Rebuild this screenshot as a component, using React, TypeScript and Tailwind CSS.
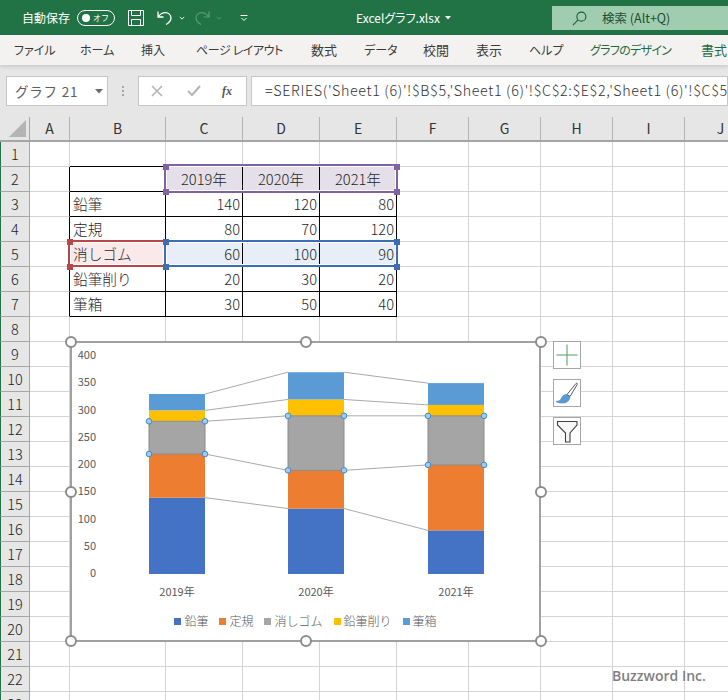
import React from "react";

const F = "font-['Noto_Sans_CJK_JP','Noto_Sans',sans-serif]";

const columns = [
  { label: "A", cls: "w-[40px]" },
  { label: "B", cls: "w-[96px]" },
  { label: "C", cls: "w-[77px]" },
  { label: "D", cls: "w-[77px]" },
  { label: "E", cls: "w-[77px]" },
  { label: "F", cls: "w-[72px]" },
  { label: "G", cls: "w-[72px]" },
  { label: "H", cls: "w-[72px]" },
  { label: "I", cls: "w-[72px]" },
  { label: "J", cls: "w-[72px]" },
];

const table: Record<number, string[]> = {
  2: ["", "2019年", "2020年", "2021年"],
  3: ["鉛筆", "140", "120", "80"],
  4: ["定規", "80", "70", "120"],
  5: ["消しゴム", "60", "100", "90"],
  6: ["鉛筆削り", "20", "30", "20"],
  7: ["筆箱", "30", "50", "40"],
};

const tabs = [
  { t: "ファイル", c: "w-[39px]" },
  { t: "ホーム", c: "w-[34px]" },
  { t: "挿入", c: "w-[28px]" },
  { t: "ページ レイアウト", c: "w-[88px] tracking-[-0.4px]" },
  { t: "数式", c: "w-[26px] text-[13px]" },
  { t: "データ", c: "w-[32px]" },
  { t: "校閲", c: "w-[26px] text-[13px]" },
  { t: "表示", c: "w-[26px] text-[13px]" },
  { t: "ヘルプ", c: "w-[34px]" },
  { t: "グラフのデザイン", c: "w-[84px] tracking-[-0.7px] text-[#1e6b41]" },
  { t: "書式", c: "w-[27px] text-[13px] text-[#1e6b41]" },
];

function Cell({ row, col }: { row: number; col: number }) {
  const inTable = row >= 2 && row <= 7 && col >= 1 && col <= 4;
  const value = inTable ? table[row][col - 1] : "";
  const w = columns[col].cls;
  const rightBlack = row >= 2 && row <= 7 && col >= 0 && col <= 4;
  const bottomBlack = row >= 1 && row <= 7 && col >= 1 && col <= 4;
  let bg = "bg-white";
  if (row === 2 && col >= 2 && col <= 4) bg = "bg-[#e4dfe9]";
  if (row === 5 && col === 1) bg = "bg-[#f9e9e9]";
  if (row === 5 && col >= 2 && col <= 4) bg = "bg-[#e8eef8]";
  const align =
    col === 1
      ? "justify-start pl-[3px]"
      : row === 2
      ? "justify-center"
      : "justify-end pr-[2px]";
  return (
    <div
      className={`${w} h-[25px] shrink-0 flex items-center border-r border-b text-[14.67px] font-light text-[#1f1f1f] ${bg} ${align} ${
        rightBlack ? "border-r-black" : "border-r-[#d4d4d4]"
      } ${bottomBlack ? "border-b-black" : "border-b-[#d4d4d4]"}`}
    >
      {value}
    </div>
  );
}

function RangeBox({ cls }: { cls: string }) {
  return <div className={`absolute border-2 shadow-[inset_0_0_0_1px_white] ${cls}`} />;
}

function Grip({ cls }: { cls: string }) {
  return <div className={`absolute w-[6px] h-[6px] ${cls}`} />;
}

function Handle({ cls }: { cls: string }) {
  return (
    <div className={`absolute w-[12px] h-[12px] rounded-full bg-white border-2 border-[#8c8c8c] ${cls}`} />
  );
}

const yOf = (v: number) => 574 - v * 0.5454;
const series = ["#4472c4", "#ed7d31", "#a5a5a5", "#ffc000", "#5b9bd5"];
const bars = [
  { x: 149, label: "2019年", vals: [140, 80, 60, 20, 30] },
  { x: 288, label: "2020年", vals: [120, 70, 100, 30, 50] },
  { x: 428, label: "2021年", vals: [80, 120, 90, 20, 40] },
];
const cum = bars.map((b) => {
  let s = 0;
  return b.vals.map((v) => (s += v));
});

function Chart() {
  return (
    <svg viewBox="72 343 467 262" className="block w-[467px] h-[262px]">
      {[400, 350, 300, 250, 200, 150, 100, 50, 0].map((v, i) => (
        <text key={v} x="96" y={359 + i * 27.25} textAnchor="end" fontSize="11" fill="#595959">
          {v}
        </text>
      ))}
      {[0, 1, 2, 3, 4].map((s) =>
        [0, 1].map((b) => (
          <line
            key={`${s}-${b}`}
            x1={bars[b].x + 56}
            y1={yOf(cum[b][s])}
            x2={bars[b + 1].x}
            y2={yOf(cum[b + 1][s])}
            stroke="#a9a9a9"
            strokeWidth="1"
          />
        ))
      )}
      {bars.map((b, bi) => (
        <g key={b.label}>
          {b.vals.map((v, s) => (
            <rect
              key={s}
              x={b.x}
              y={yOf(cum[bi][s])}
              width="56"
              height={v * 0.5454}
              fill={series[s]}
            />
          ))}
          <rect
            x={b.x}
            y={yOf(cum[bi][2])}
            width="56"
            height={b.vals[2] * 0.5454}
            fill="none"
            stroke="#8a8a8a"
            strokeWidth="1"
          />
          <text x={b.x + 28} y="595.5" textAnchor="middle" fontSize="11" fill="#595959">
            {b.label}
          </text>
          {[cum[bi][2], cum[bi][1]].map((v) =>
            [b.x, b.x + 56].map((x) => (
              <circle
                key={`${v}-${x}`}
                cx={x}
                cy={yOf(v)}
                r="2.8"
                fill="#9fcbf0"
                stroke="#3c8ccb"
                strokeWidth="1"
              />
            ))
          )}
        </g>
      ))}
    </svg>
  );
}

const legend = [
  { t: "鉛筆", c: "bg-[#4472c4]" },
  { t: "定規", c: "bg-[#ed7d31]" },
  { t: "消しゴム", c: "bg-[#a5a5a5]" },
  { t: "鉛筆削り", c: "bg-[#ffc000]" },
  { t: "筆箱", c: "bg-[#5b9bd5]" },
];

export default function App() {
  return (
    <div className={`relative w-[728px] h-[700px] overflow-hidden bg-white ${F}`}>
      {/* Title bar */}
      <div className="h-[35px] bg-[#217346] flex items-center text-white relative">
        <span className="ml-[22px] text-[12px] whitespace-nowrap [font-feature-settings:'palt']">自動保存</span>
        <div className="ml-[7px] w-[38px] h-[16px] rounded-full border border-white flex items-center justify-between pl-[4px] pr-[5px]">
          <span className="w-[8px] h-[8px] rounded-full bg-white" />
          <span className="text-[8px] leading-none">オフ</span>
        </div>
        <svg viewBox="0 0 16 16" className="ml-[13px] w-[16px] h-[16px]" fill="none" stroke="#fff" strokeWidth="1">
          <path d="M.5.5h15v15H.5z" />
          <path d="M3.5.5v5h9v-5M3.5 15.5v-6h9v6" />
        </svg>
        <svg viewBox="0 0 16 16" className="ml-[13px] w-[16px] h-[16px]" fill="none" stroke="#fff" strokeWidth="1.3">
          <path d="M1 1.5v5.5h5.5M1.2 7C3 4 5.5 2.6 8.5 2.6c3 0 5.5 2.3 5.5 5.2 0 3-2 5-5 6.7" />
        </svg>
        <svg viewBox="0 0 8 5" className="ml-[6px] w-[6px] h-[4px]" fill="none" stroke="#fff" strokeWidth="1.2">
          <path d="M1 1l3 3 3-3" />
        </svg>
        <svg viewBox="0 0 16 16" className="ml-[9px] w-[16px] h-[16px]" fill="none" stroke="#5d9a78" strokeWidth="1.2">
          <path d="M15 1.5v5.5H9.5M14.8 7C13 4 10.5 2.6 7.5 2.6c-3 0-5.5 2.3-5.5 5.2 0 3 2 5 5 6.7" />
        </svg>
        <svg viewBox="0 0 8 5" className="ml-[6px] w-[6px] h-[4px]" fill="none" stroke="#5d9a78" strokeWidth="1.2">
          <path d="M1 1l3 3 3-3" />
        </svg>
        <svg viewBox="0 0 8 8" className="ml-[18px] w-[8px] h-[8px]" fill="none" stroke="#fff" strokeWidth="1">
          <path d="M.5 1.5h7M1.5 4l2.5 2.5L6.500 4" />
        </svg>
        <span className="absolute left-[356px] top-[9px] text-[12px] leading-[18px] whitespace-nowrap [font-feature-settings:'palt']">
          Excelグラフ.xlsx
        </span>
        <svg viewBox="0 0 6 4" className="absolute left-[445px] top-[16px] w-[6px] h-[4px]" fill="#fff">
          <path d="M0 0h6L3 3.500z" />
        </svg>
        <div className="absolute left-[552px] top-[6px] w-[176px] h-[24px] bg-[#a0cdb0] flex items-center text-[#1f4d33]">
          <svg viewBox="0 0 16 16" className="ml-[20px] w-[15px] h-[15px]" fill="none" stroke="#1f5c3a" strokeWidth="1.2">
            <circle cx="10" cy="6" r="4.800" />
            <path d="M6.500 9.500L1 15" />
          </svg>
          <span className="ml-[15px] text-[12.5px] whitespace-nowrap">検索 (Alt+Q)</span>
        </div>
      </div>

      {/* Ribbon tabs */}
      <div className="h-[30px] bg-[#f3f2f1] flex items-center gap-[27px] pl-[14px] text-[12px] text-[#3b3a39] relative shadow-[0_2px_4px_rgba(0,0,0,0.12)] whitespace-nowrap [font-feature-settings:'palt']">
        {tabs.map((t) => (
          <span key={t.t} className={`shrink-0 ${t.c}`}>
            {t.t}
          </span>
        ))}
      </div>

      {/* Formula bar */}
      <div className="h-[52px] bg-[#e6e6e6] flex items-start pt-[11px] pl-[6px]">
        <div className="w-[102px] h-[30px] bg-white border border-[#c6c6c6] flex items-center pl-[8px] text-[13.500px] text-[#605e5c]">
          <span className="tracking-[0.8px]">グラフ 21</span>
          <svg viewBox="0 0 8 5" className="ml-auto mr-[4px] w-[8px] h-[5px]" fill="#6b6b6b">
            <path d="M0 0h8L4 4.500z" />
          </svg>
        </div>
        <div className="w-[30px] h-[30px] flex items-center justify-center">
          <svg viewBox="0 0 2 10" className="w-[2px] h-[10px]" fill="#a6a6a6">
            <path d="M0 0h2v2H0zM0 4h2v2H0zM0 8h2v2H0z" />
          </svg>
        </div>
        <div className="w-[109px] h-[30px] bg-white border border-[#c6c6c6] flex items-center">
          <svg viewBox="0 0 12 12" className="ml-[12px] w-[12px] h-[12px]" fill="none" stroke="#b5b5b5" strokeWidth="1.600">
            <path d="M1 1l10 10M11 1L1 11" />
          </svg>
          <svg viewBox="0 0 14 12" className="ml-[24px] w-[14px] h-[12px]" fill="none" stroke="#b5b5b5" strokeWidth="2">
            <path d="M1 6l4 4 8-9" />
          </svg>
          <span className="ml-[21px] text-[12px] italic font-bold text-[#555] font-['Liberation_Serif',serif]">fx</span>
        </div>
        <div className="ml-[4px] flex-1 h-[30px] pb-[2px] bg-white border border-[#c6c6c6] flex items-center pl-[13px] overflow-hidden text-[14.300px] font-light text-[#333] whitespace-nowrap tracking-[0.65px]">
          =SERIES('Sheet1 (6)'!$B$5,'Sheet1 (6)'!$C$2:$E$2,'Sheet1 (6)'!$C$5
        </div>
      </div>

      {/* Sheet */}
      <div className="relative">
        {/* Column header */}
        <div className="flex h-[25px] bg-[#e6e6e6] border-b-2 border-b-[#a6a6a6]">
          <div className="w-[30px] h-[23px] shrink-0 border-r border-r-[#a6a6a6] flex items-end justify-end pr-[3px] pb-[3px]">
            <svg viewBox="0 0 17 17" className="w-[17px] h-[17px]" fill="#b4b4b4">
              <path d="M17 0v17H0z" />
            </svg>
          </div>
          {columns.map((c) => (
            <div
              key={c.label}
              className={`${c.cls} h-[23px] shrink-0 border-r border-r-[#b4b4b4] flex items-center justify-center text-[14px] text-[#333]`}
            >
              {c.label}
            </div>
          ))}
        </div>
        {/* Rows */}
        {Array.from({ length: 23 }, (_, i) => i + 1).map((row) => (
          <div key={row} className="flex">
            <div className="w-[30px] h-[25px] shrink-0 bg-[#e6e6e6] border-r border-r-[#a6a6a6] border-b border-b-[#a6a6a6] border-l border-l-[#217346] flex items-center justify-center text-[14.500px] font-light text-[#222]">
              {row}
            </div>
            {columns.map((_, col) => (
              <Cell key={col} row={row} col={col} />
            ))}
          </div>
        ))}
      </div>

      {/* Range highlights over the sheet */}
      <RangeBox cls="left-[164px] top-[164px] w-[234px] h-[29px] border-[#8064a2]" />
      <RangeBox cls="left-[68px] top-[240px] w-[98px] h-[27px] border-[#b8474a]" />
      <RangeBox cls="left-[164px] top-[240px] w-[234px] h-[27px] border-[#3c6eb4]" />
      <Grip cls="left-[163px] top-[164px] bg-[#8064a2]" />
      <Grip cls="left-[394px] top-[164px] bg-[#8064a2]" />
      <Grip cls="left-[163px] top-[189px] bg-[#8064a2]" />
      <Grip cls="left-[394px] top-[189px] bg-[#8064a2]" />
      <Grip cls="left-[67px] top-[239px] bg-[#b8474a]" />
      <Grip cls="left-[67px] top-[264px] bg-[#b8474a]" />
      <Grip cls="left-[163px] top-[239px] bg-[#3c6eb4]" />
      <Grip cls="left-[394px] top-[239px] bg-[#3c6eb4]" />
      <Grip cls="left-[163px] top-[264px] bg-[#3c6eb4]" />
      <Grip cls="left-[394px] top-[264px] bg-[#3c6eb4]" />

      {/* Chart */}
      <div className="absolute left-[70px] top-[341px] w-[471px] h-[301px] bg-white border-2 border-[#a0a0a0] flex flex-col">
        <Chart />
        <div className="mt-[7px] flex justify-center gap-[11px] text-[12px] leading-[18px] font-light text-[#595959]">
          {legend.map((l) => (
            <div key={l.t} className="flex items-center gap-[3px]">
              <span className={`w-[7px] h-[7px] ${l.c}`} />
              <span>{l.t}</span>
            </div>
          ))}
        </div>
      </div>
      <Handle cls="left-[65px] top-[336px]" />
      <Handle cls="left-[300px] top-[336px]" />
      <Handle cls="left-[535px] top-[336px]" />
      <Handle cls="left-[65px] top-[486px]" />
      <Handle cls="left-[535px] top-[486px]" />
      <Handle cls="left-[65px] top-[635px]" />
      <Handle cls="left-[300px] top-[635px]" />
      <Handle cls="left-[535px] top-[635px]" />

      {/* Chart buttons */}
      <div className="absolute left-[553px] top-[341px] flex flex-col gap-[10px]">
        <div className="w-[28px] h-[28px] bg-white border border-[#a6a6a6] flex items-center justify-center">
          <svg viewBox="0 0 22 22" className="w-[22px] h-[22px]" stroke="#4e9a64" strokeWidth="1">
            <path d="M11 0.500v21M0.500 11h21" />
          </svg>
        </div>
        <div className="w-[28px] h-[28px] bg-white border border-[#a6a6a6] flex items-center justify-center">
          <svg viewBox="0 0 24 24" className="w-[24px] h-[24px]">
            <path d="M12 13.500L21 2.500c.8-.8 1.800 0 1.200 1L15 15.500z" fill="#fff" stroke="#595959" strokeWidth="1" />
            <path d="M11.500 13.500l3.500 2.500c-.5 4-4 6-7.500 6-2.500 0-5-.5-6.500-1.500 3 0 4.500-1.500 5.500-3.500 1-2.500 3-3.500 5-3.500z" fill="#5b9bd5" stroke="#3f7fb8" strokeWidth="0.600" />
          </svg>
        </div>
        <div className="w-[28px] h-[28px] bg-white border border-[#a6a6a6] flex items-center justify-center">
          <svg viewBox="0 0 24 26" className="w-[24px] h-[26px]">
            <path d="M2.500 3.500h19.500v3.500l-7 8v9h-4.500v-9l-8-8z" fill="#f7f7f7" stroke="#404040" strokeWidth="1.100" />
          </svg>
        </div>
      </div>

      {/* Watermark */}
      <div className="absolute left-[612px] top-[666px] text-[14px] leading-[20px] font-semibold text-[#7f7f7f] font-['Open_Sans',sans-serif] whitespace-nowrap">
        Buzzword Inc.
      </div>
    </div>
  );
}
